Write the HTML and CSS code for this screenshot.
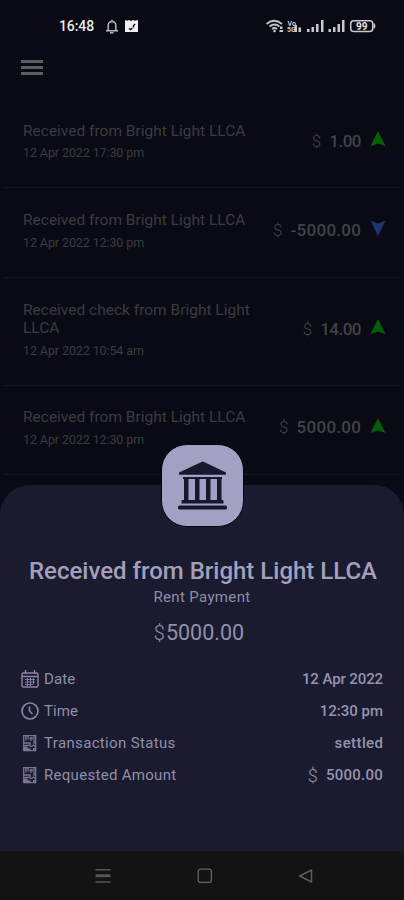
FILE: index.html
```
<!DOCTYPE html>
<html lang="en">
<head>
<meta charset="utf-8">
<title>Transactions</title>
<link rel="stylesheet" href="styles.css">
</head>
<body>
<div class="phone">
  <header class="status">
    <span class="clock">16:48</span>
    <svg class="bell" width="12" height="15" viewBox="0 0 12 15" fill="none" stroke="#b8b8bc" stroke-width="1.5"><path d="M0 11.800h12M2.200 11V6.300a3.800 3.800 0 0 1 7.600 0V11M6 2.500V.8M4 13.700h3.500"/></svg>
    <svg class="note" width="13" height="14" viewBox="0 0 13 14"><path d="M0 1l2 .8L4 1l2 1 2-1 2 .8L13 1v12H0z" fill="#f1f1f2"/><path d="M4 9.500l1.500 1 2-1.500M8.500 8.500v-2l1.700-1.500" stroke="#14141b" stroke-width="1.500" fill="none"/></svg>
    <svg class="signals" width="112" height="16" viewBox="0 0 112 16">
      <g fill="none" stroke="#c4c4c8" stroke-width="1.700"><path d="M.500 6q7.500-6.500 15.500 0M3.500 8.500q5-4 10 0M6 11q2.500-2 5 0"/></g>
      <g fill="#c9c9cc"><circle cx="8.500" cy="13" r="1.300"/><path d="M14 8.500h2.500V11H14zM13.500 12H17v2h-3.500z"/>
      <path d="M28.500 7H31v7h-2.500zM32.500 9.500H35V14h-2.500z"/>
      <path d="M41 11h2.500v3H41zM45.500 9H48v5h-2.500zM50 6h2.500v8H50zM55 2h2.500v12H55zM62.500 11H65v3h-2.500zM67 9h2.500v5H67zM71.500 6H74v8h-2.500zM76 2h2.500v12H76z"/></g>
      <text x="21.500" y="7.500" class="tiny">Vo</text><text x="21" y="14" class="tiny">5G</text>
      <rect x="84.700" y="2.800" width="22" height="10.800" rx="3" fill="none" stroke="#c9c9cc" stroke-width="1.500"/><path d="M107.500 4.500q4 3.500 0 7z" fill="#c9c9cc"/>
      <text x="90" y="12" class="charge">99</text>
    </svg>
  </header>

  <div class="toolbar"><svg width="22" height="16" viewBox="0 0 22 16"><path d="M0 0h22v3H0zM0 6h22v3H0zM0 12h22v3H0z" fill="#5d5d5f"/></svg></div>

  <main class="list">
    <article class="row">
      <div class="info"><div class="name">Received from Bright Light LLCA</div><div class="when">12 Apr 2022 17:30 pm</div></div>
      <div class="amount"><span class="cur">$</span><span class="num short">1.00</span></div>
      <svg class="arrow" width="16" height="16" viewBox="0 0 16 16"><path d="M8 0l7.500 15L8 12.500.5 15z" fill="#065f08"/></svg>
    </article>
    <article class="row">
      <div class="info"><div class="name">Received from Bright Light LLCA</div><div class="when">12 Apr 2022 12:30 pm</div></div>
      <div class="amount"><span class="cur">$</span><span class="num long">-5000.00</span></div>
      <svg class="arrow" width="16" height="16" viewBox="0 0 16 16"><path d="M8 16L.5.500 8 3.500 15.500.500z" fill="#1d3474"/></svg>
    </article>
    <article class="row tall">
      <div class="info"><div class="name">Received check from Bright Light<br>LLCA</div><div class="when">12 Apr 2022 10:54 am</div></div>
      <div class="amount"><span class="cur">$</span><span class="num short">14.00</span></div>
      <svg class="arrow" width="16" height="16" viewBox="0 0 16 16"><path d="M8 0l7.500 15L8 12.500.5 15z" fill="#065f08"/></svg>
    </article>
    <article class="row">
      <div class="info"><div class="name">Received from Bright Light LLCA</div><div class="when">12 Apr 2022 12:30 pm</div></div>
      <div class="amount"><span class="cur">$</span><span class="num long">5000.00</span></div>
      <svg class="arrow" width="16" height="16" viewBox="0 0 16 16"><path d="M8 0l7.500 15L8 12.500.5 15z" fill="#065f08"/></svg>
    </article>
  </main>

  <section class="sheet">
    <div class="badge">
      <svg width="49" height="49" viewBox="0 0 49 49" fill="#17182e"><path d="M1 11.500L24 .7q.8-.4 1.600 0L48 11.500v1.300q0 1-1 1H2q-1 0-1-1zM5 16h39v2H5zM6 18h4.500v21H6zM17 18h4.500v21H17zM28 18h4.500v21H28zM39 18h4.500v21H39zM4.500 39h40q1 0 1 1v2.500h-42V40q0-1 1-1z"/><rect x="0" y="44.500" width="49" height="4" rx="1.500"/></svg>
    </div>
    <h1>Received from Bright Light LLCA</h1>
    <div class="kind">Rent Payment</div>
    <div class="total"><span class="total-cur">$</span>5000.00</div>
    <dl class="details">
      <div class="item">
        <svg width="18" height="18" viewBox="0 0 18 18" fill="none" stroke="#8886a3" stroke-width="1.400"><rect x="1" y="3" width="16" height="14" rx="1.500"/><path d="M1 6.500h16M4.500 0v4M13.500 0v4"/><path d="M4 9.500h10M4 12h10M4 14.500h8M6.500 8v8M9.500 8v8M12.500 8v6" stroke-width=".9"/></svg>
        <dt>Date</dt><dd class="day">12 Apr 2022</dd>
      </div>
      <div class="item">
        <svg width="18" height="18" viewBox="0 0 18 18" fill="none" stroke="#8886a3" stroke-width="1.600"><circle cx="9" cy="9" r="8"/><path d="M8.500 4.500V9l3 3"/></svg>
        <dt>Time</dt><dd>12:30 pm</dd>
      </div>
      <div class="item">
        <svg width="18" height="18" viewBox="0 0 18 18" fill="none" stroke="#77758f" stroke-width="1.300"><path d="M2.700 1.700h12v15h-12z"/><path d="M5 2v4.500M7 2v3.500M10 3v4M8.500 4.500H12M3 9h6v2.500H3.500M13 2v8M9.500 13l3-2 2 2"/><path d="M3 12.500h3l1.500 2h2V17H3zM12 14h2v2h-2z" fill="#77758f" stroke="none"/></svg>
        <dt class="status-label">Transaction Status</dt><dd class="settled">settled</dd>
      </div>
      <div class="item">
        <svg width="18" height="18" viewBox="0 0 18 18" fill="none" stroke="#77758f" stroke-width="1.300"><path d="M2.700 1.700h12v15h-12z"/><path d="M5 2v4.500M7 2v3.500M10 3v4M8.500 4.500H12M3 9h6v2.500H3.500M13 2v8M9.500 13l3-2 2 2"/><path d="M3 12.500h3l1.500 2h2V17H3zM12 14h2v2h-2z" fill="#77758f" stroke="none"/></svg>
        <dt class="requested">Requested Amount</dt><dd class="sum"><span class="detail-cur">$</span><span>5000.00</span></dd>
      </div>
    </dl>
  </section>

  <nav class="nav">
    <svg width="16" height="16" viewBox="0 0 16 16"><path d="M.500 1h15v1.500H.500zM.500 6.300h15v3H.500zM.500 13.300h15v1.500H.500z" fill="#555"/></svg>
    <svg width="16" height="16" viewBox="0 0 16 16"><rect x="1.200" y="1.200" width="13.200" height="13.200" rx="2.500" fill="none" stroke="#646464" stroke-width="1.300"/></svg>
    <svg width="16" height="16" viewBox="0 0 16 16"><path d="M13.500 2v12L1.700 8z" fill="none" stroke="#5c5c5c" stroke-width="1.500" stroke-linejoin="round"/></svg>
  </nav>
</div>
</body>
</html>
```
FILE: styles.css
```
* { box-sizing: border-box; margin: 0; padding: 0; }
body { background: #090a13; font-family: Roboto, "Liberation Sans", sans-serif; }
svg { display: block; flex: none; }
.phone { width: 404px; height: 900px; display: flex; flex-direction: column; overflow: hidden; background: #090a13; white-space: nowrap; }
.status { height: 54px; padding: 0 26px 2px 59px; display: flex; align-items: center; }
.clock { width: 47px; color: #e8e8ea; font-size: 14px; font-weight: 500; letter-spacing: -0.1px; }
.note { margin-left: 7px; }
.signals { margin-left: auto; }
.tiny { font-size: 7px; font-weight: 700; fill: #c9c9cc; }
.charge { font-size: 10px; font-weight: 700; fill: #e3e3e5; }
.toolbar { height: 45px; padding: 6px 21px; }
.list { height: 386px; }
.row { height: 89.300px; margin: 0 4px; padding: 0 14px 2px 19px; display: flex; align-items: center; border-bottom: 1px solid #15161e; }
.row.tall { height: 108px; }
.info { flex: 1; color: #3b3c42; }
.name { font-size: 15.500px; line-height: 18.500px; }
.when { margin-top: 3px; font-size: 12.500px; line-height: 19px; letter-spacing: -0.1px; }
.amount { display: flex; align-items: center; gap: 8px; margin-right: 9px; padding-bottom: 3px; color: #424348; font-size: 17px; }
.cur { font-weight: 300; }
.num { font-weight: 500; }
.num.short { letter-spacing: -0.5px; }
.num.long { letter-spacing: 0.3px; margin-right: -0.3px; }
.arrow { margin-top: -6px; }
.sheet { flex: 1; display: flex; flex-direction: column; align-items: center; background: #1b1b2f; border-radius: 30px 30px 0 0; color: #a3a0bd; }
.badge { width: 83px; height: 83px; margin-top: -41px; flex: none; display: flex; align-items: center; justify-content: center; border: 1px solid #05060c; border-radius: 26px; background: #a3a1c3; }
h1 { margin: 28px 0 0 2px; font-size: 24px; line-height: 32px; font-weight: 500; }
.kind { font-size: 15px; line-height: 20px; letter-spacing: 0.35px; color: #8e8ba7; }
.total { margin: 12px 6px 0 0; font-size: 21.500px; line-height: 28px; color: #9290aa; }
.total-cur { font-size: 20px; font-weight: 300; margin-right: 1px; }
.details { align-self: stretch; margin-top: 16px; padding: 0 21px; }
.item { height: 32px; display: flex; align-items: center; }
dt { margin-left: 5px; font-size: 15px; letter-spacing: 0.1px; color: #918eaa; }
.status-label { letter-spacing: 0.35px; }
.requested { letter-spacing: 0.3px; }
dd { margin-left: auto; font-size: 15px; font-weight: 500; color: #9693ae; }
.day { letter-spacing: -0.1px; }
.settled { letter-spacing: 0.4px; margin-right: -0.4px; }
.sum { display: flex; align-items: center; gap: 8px; letter-spacing: 0.25px; }
.detail-cur { font-size: 18px; font-weight: 300; }
.nav { height: 49px; padding: 0 90px 0 95px; display: flex; align-items: center; justify-content: space-between; background: #131313; }
```
